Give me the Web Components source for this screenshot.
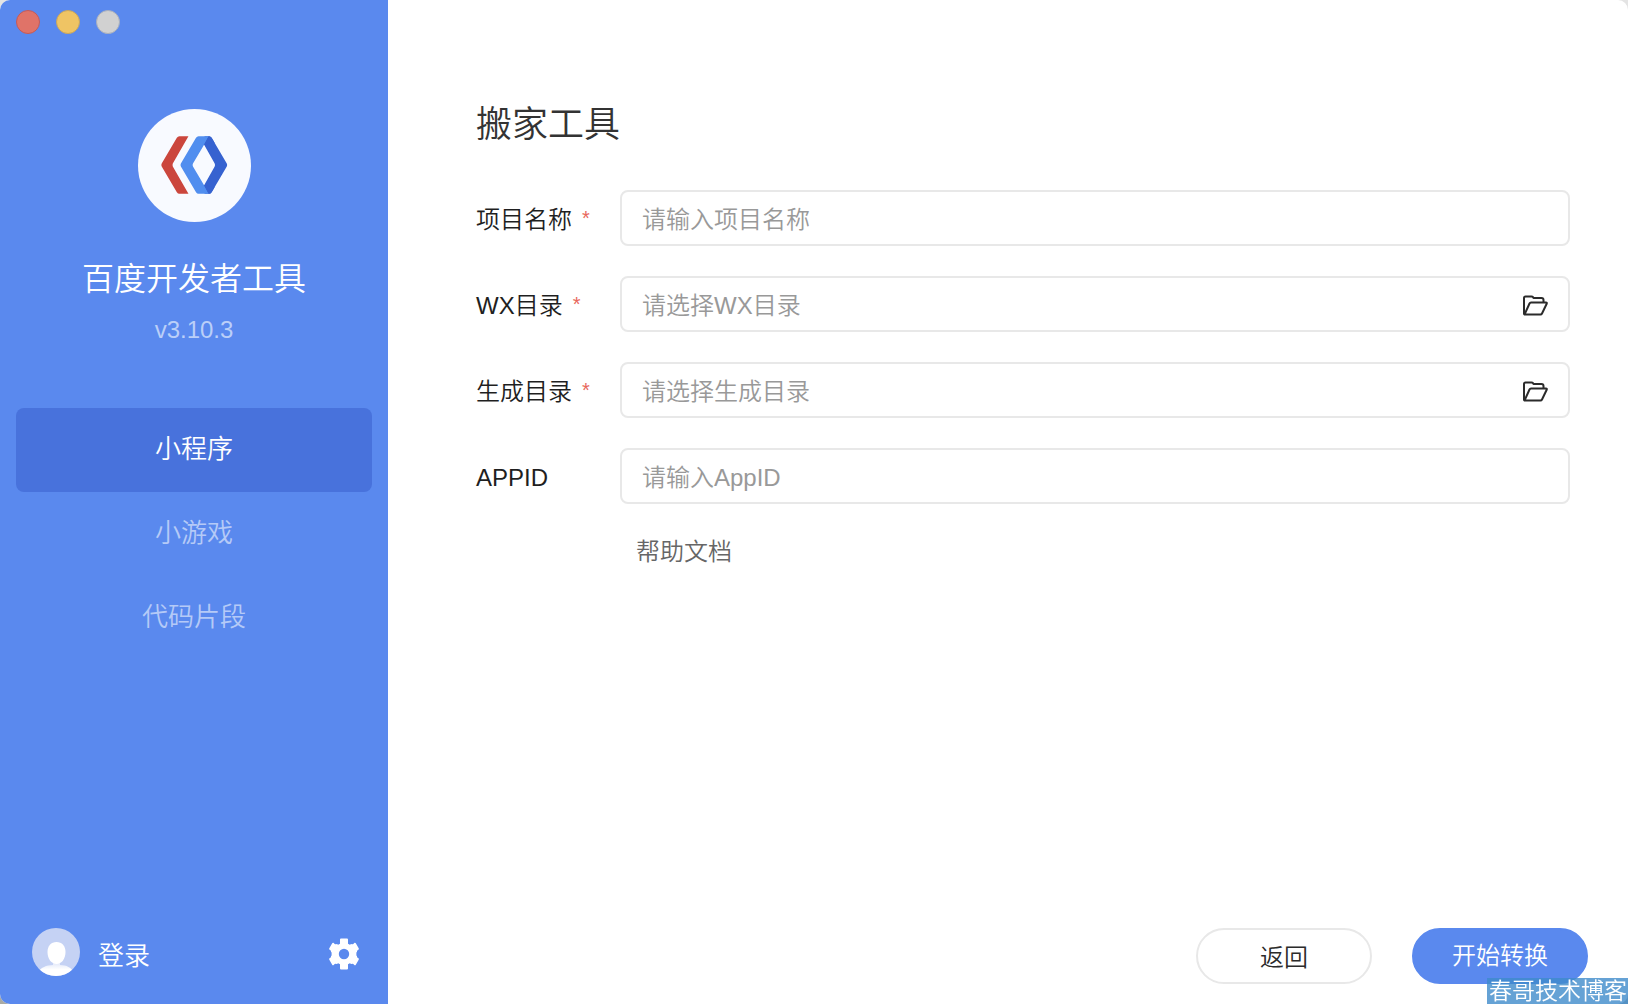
<!DOCTYPE html>
<html lang="zh-CN">
<head>
<meta charset="utf-8">
<title>百度开发者工具</title>
<style>
  html, body { margin: 0; min-height: 100vh; }
  body {
    display: flex;
    background: linear-gradient(#e4e4e4, #a9aaa4);
    font-family: "Liberation Sans", "Noto Sans CJK SC", sans-serif;
    font-weight: 350;
    font-size: 24px;
    line-height: 32px;
    color: #1f1f1f;
  }
</style>
</head>
<body>
<tool-window>
  <side-bar slot="side">
    <window-controls slot="controls"></window-controls>
    <brand-card slot="brand" version="v3.10.3">百度开发者工具</brand-card>
    <nav-item active>小程序</nav-item>
    <nav-item>小游戏</nav-item>
    <nav-item>代码片段</nav-item>
    <user-bar slot="user">登录</user-bar>
  </side-bar>
  <migrate-form></migrate-form>
</tool-window>
<blog-mark>春哥技术博客</blog-mark>

<script>
const define = (name, html, setup) => {
  const template = document.createElement('template');
  template.innerHTML = '<style>*,*::before{box-sizing:border-box}button,input{font:inherit}</style>' + html;
  customElements.define(name, class extends HTMLElement {
    constructor() {
      super();
      this.attachShadow({ mode: 'open' }).append(template.content.cloneNode(true));
    }
    connectedCallback() { if (setup) setup(this, this.shadowRoot); }
  });
};

define('tool-window', `
  <style>
    :host { display: flex; flex: 1; min-height: 100vh; border-radius: 10px; overflow: hidden; background: #fff; }
    main { flex: 1; display: flex; min-width: 0; }
    ::slotted(*) { flex: 1; min-width: 0; }
    ::slotted([slot=side]) { flex: 0 0 388px; }
  </style>
  <slot name="side"></slot>
  <main><slot></slot></main>`);

define('side-bar', `
  <style>
    :host { display: flex; flex-direction: column; box-sizing: border-box; padding: 10px 16px 28px; background: #5a89ee; color: #fff; }
    nav { flex: 1; display: flex; flex-direction: column; margin-top: 60px; }
  </style>
  <slot name="controls"></slot>
  <slot name="brand"></slot>
  <nav><slot></slot></nav>
  <slot name="user"></slot>`);

define('window-controls', `
  <style>
    :host { display: flex; gap: 16px; }
    button { width: 24px; height: 24px; padding: 0; border: 1px solid; border-radius: 50%; }
    .close { background: #e07368; border-color: #c45a58; }
    .min { background: #efc464; border-color: #c9a55c; }
    .max { background: #d1d1d1; border-color: #a9afbb; }
  </style>
  <button class="close" aria-label="关闭"></button>
  <button class="min" aria-label="最小化"></button>
  <button class="max" aria-label="最大化"></button>`);

define('brand-card', `
  <style>
    :host { display: flex; flex-direction: column; align-items: center; margin-top: 75px; }
    svg { display: block; width: 113px; height: 113px; }
    h1 { margin: 37px 0 0; font-size: 32px; line-height: 40px; font-weight: inherit; }
    p { margin: 15px 0 2px; line-height: 32px; color: #bbcff8; }
  </style>
  <svg viewBox="0 0 112 112" aria-hidden="true">
    <circle cx="56" cy="56" r="56" fill="#f8faff"/>
    <path fill="#cb463d" d="M41 27H50L34.500 54Q34 55.500 34.500 57L50 84H41Q39.500 84 38.500 82.500L23.500 57Q22.700 55.500 23.500 54L38.500 28.500Q39.500 27 41 27Z"/>
    <path fill="#3662d0" d="M66 27H70.500Q72 27 73 28.500L88 54Q88.800 55.500 88 57L73 82.500Q72 84 70.500 84H66L65 76.500L76 57Q76.700 55.500 76 54L65 34.500Z"/>
    <path fill="#518eef" d="M60 27H70L65.500 35.500L54.500 54Q53.700 55.500 54.500 57L65.500 75.500L70 84H60Q58.500 84 57.500 82.500L42.500 57Q41.700 55.500 42.500 54L57.500 28.500Q58.500 27 60 27Z"/>
    <path fill="#3662d0" d="M70 27H70.500Q72 27 73 28.500L76 33.500L65.500 35.500ZM70 84H70.500Q72 84 73 82.500L76 77.500L65.500 75.500Z"/>
  </svg>
  <h1><slot></slot></h1>
  <p></p>`, (host, root) => {
    root.querySelector('p').textContent = host.getAttribute('version');
  });

define('nav-item', `
  <style>
    :host { display: block; color: #b5caf7; }
    :host([active]) { color: #fff; --fill: #4872dc; }
    a { display: flex; align-items: center; justify-content: center; height: 84px; padding-bottom: 2px; border-radius: 8px; background: var(--fill, transparent); color: inherit; font-size: 26px; text-decoration: none; }
  </style>
  <a href="#"><span><slot></slot></span></a>`);

define('user-bar', `
  <style>
    :host { display: flex; align-items: center; justify-content: space-between; padding: 0 12px 0 16px; }
    button { display: flex; align-items: center; padding: 0; border: 0; background: none; color: #fff; }
    .login { gap: 18px; font-size: 26px; line-height: 32px; }
    .login span { padding-top: 8px; }
    .settings { padding-top: 4px; }
    svg { display: block; }
  </style>
  <button class="login">
    <svg width="48" height="48" viewBox="0 0 48 48" aria-hidden="true">
      <defs>
        <clipPath id="c"><circle cx="24" cy="24" r="24"/></clipPath>
        <linearGradient id="g" x1="0" y1="0" x2="0" y2="1"><stop offset="0" stop-color="#dde4f8"/><stop offset=".5" stop-color="#fff"/></linearGradient>
      </defs>
      <g clip-path="url(#c)">
        <path fill="#c5d2f4" d="M0 0h48v48H0z"/>
        <path fill="url(#g)" d="M21 34h7v3c7 0 11 3 13 6v6H7v-6c2-3 7-6 14-6z"/>
        <path fill="#fff" d="M24.500 14c5.500 0 9 4 9 10 0 7-4 12-9 12s-9-5-9-12c0-6 3.500-10 9-10z"/>
      </g>
    </svg>
    <span><slot></slot></span>
  </button>
  <button class="settings" aria-label="设置">
    <svg width="32" height="36" viewBox="0 0 32 36" aria-hidden="true">
      <path fill="#fff" fill-rule="evenodd" d="M12 3.500q0-1 1-1h6q1 0 1 1v4.300q1 .4 1.800 1l1.400-.9q2 .8 2.800-.6l.6-.5q.8-.3 1.200.5l2.900 5q.5.900-.3 1.400-2 .8-1.400 2.300l-.8.700q.6 1.300 0 2.600l.8.700q-.6 1.500 1.400 2.300.8.500.3 1.400l-2.900 5q-.4.800-1.200.5l-.6-.5q-.8-1.400-2.800-.6l-1.400-.9q-.8.600-1.800 1v4.300q0 1-1 1h-6q-1 0-1-1v-4.300q-1-.4-1.800-1l-1.400.9q-2-.8-2.800.6l-.6.500q-.8.300-1.200-.5l-2.900-5q-.5-.9.300-1.400 2-.8 1.400-2.300l.8-.7q-.6-1.300 0-2.600l-.8-.7q.6-1.500-1.400-2.300-.8-.5-.3-1.400l2.900-5q.4-.8 1.200-.5l.6.500q.8 1.400 2.800.6l1.400.9q.8-.6 1.800-1zM16 12.800a5.200 5.200 0 1 0 0 10.400 5.200 5.200 0 0 0 0-10.400z"/>
    </svg>
  </button>`);

define('form-row', `
  <style>
    :host { display: flex; align-items: center; }
    label { flex: 0 0 144px; display: flex; align-items: center; gap: 10px; }
    label span { padding-top: 4px; }
    i { display: none; font-style: normal; font-size: 20px; line-height: 32px; color: #e8675c; }
    :host([required]) i { display: block; }
    .box { flex: 1; min-width: 0; display: flex; align-items: center; height: 56px; padding: 0 20px; border: 2px solid #e8e8e8; border-radius: 8px; }
    input { flex: 1; min-width: 0; height: 36px; padding: 4px 0 0; border: 0; outline: 0; background: none; color: #1f1f1f; }
    input::placeholder { color: #999; opacity: 1; }
    button { display: none; padding: 4px 0 0; border: 0; background: none; }
    :host([browse]) button { display: block; }
    svg { display: block; }
  </style>
  <label for="field"><span><slot></slot></span><i>*</i></label>
  <div class="box">
    <input id="field" type="text">
    <button aria-label="选择目录">
      <svg width="26" height="22" viewBox="0 0 26 22" fill="none" stroke="#2b2b2b" stroke-width="2" stroke-linejoin="round" stroke-linecap="round" aria-hidden="true">
        <path d="M2 19V3Q2 1.500 3.500 1.500H9.500Q10.500 1.500 11 2.200L11.500 3H19.500Q21.500 3 21.500 5V7M2.500 19.500L7.500 8.500Q8 7.500 9 7.500H24Q25.200 7.500 24.700 8.700L20 18.500Q19.500 19.500 18.500 19.500H3.500Q2 19.500 2 18"/>
      </svg>
    </button>
  </div>`, (host, root) => {
    root.querySelector('input').placeholder = host.getAttribute('hint');
  });

define('pill-button', `
  <style>
    :host { display: block; }
    button { display: block; width: 176px; height: 56px; padding: 4px 0 0; border: 2px solid #e8e8e8; border-radius: 28px; background: #fff; color: #2b2b2b; line-height: 32px; }
    :host([primary]) button { padding: 0; border-color: #5a89ee; background: #5a89ee; color: #fff; }
  </style>
  <button><slot></slot></button>`);

define('migrate-form', `
  <style>
    :host { display: flex; flex-direction: column; box-sizing: border-box; padding: 101px 40px 20px 88px; }
    h2 { margin: 0 0 41px; font-size: 36px; line-height: 48px; font-weight: inherit; color: #333; }
    .rows { display: flex; flex-direction: column; gap: 30px; margin-right: 18px; }
    a { align-self: flex-start; margin: 32px 0 0 160px; color: #666; text-decoration: none; }
    footer { display: flex; justify-content: flex-end; gap: 40px; margin-top: auto; }
  </style>
  <h2>搬家工具</h2>
  <div class="rows">
    <form-row required hint="请输入项目名称">项目名称</form-row>
    <form-row required browse hint="请选择WX目录">WX目录</form-row>
    <form-row required browse hint="请选择生成目录">生成目录</form-row>
    <form-row hint="请输入AppID">APPID</form-row>
  </div>
  <a href="#">帮助文档</a>
  <footer>
    <pill-button>返回</pill-button>
    <pill-button primary>开始转换</pill-button>
  </footer>`);

define('blog-mark', `
  <style>
    :host { position: fixed; right: 0; bottom: 0; padding: 0 1px 4px 2px; background: rgba(62, 139, 203, .8); color: #fff; font-family: "Noto Sans CJK SC", sans-serif; font-size: 23px; line-height: 22px; }
  </style>
  <slot></slot>`);
</script>
</body>
</html>
